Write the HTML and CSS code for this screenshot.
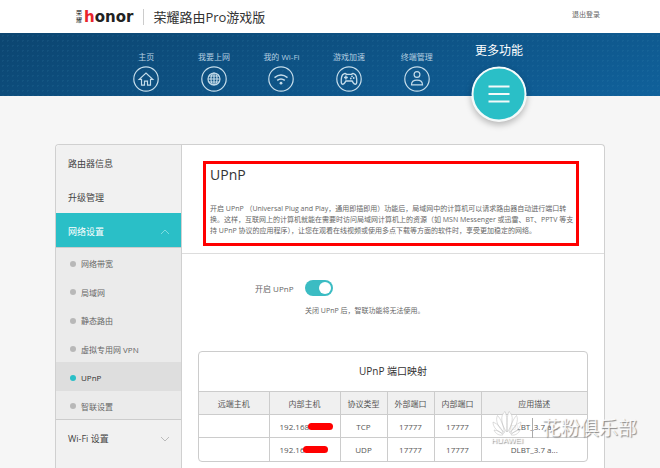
FILE: index.html
```
<!DOCTYPE html>
<html lang="zh-CN">
<head>
  <meta charset="UTF-8">
  <meta name="viewport" content="width=device-width, initial-scale=1.0">
  <title>荣耀路由Pro游戏版</title>
  <link rel="stylesheet" href="styles.css">
</head>
<body>
  <header class="header">
    <div class="brand">
      <span class="brand-cn">荣<br>耀</span>
      <span class="brand-en"><span class="red">h</span>onor</span>
      <span class="brand-title">荣耀路由Pro游戏版</span>
    </div>
    <a href="#" class="logout">退出登录</a>
  </header>

  <nav class="nav">
    <div class="nav-list">
      <a href="#" class="nav-item">
        <span>主页</span>
        <svg viewBox="0 0 26 26">
          <circle cx="13" cy="13" r="12.2"/>
          <path d="M6.2 13.4 13 7l6.8 6.4h-2.3v5.8h-3v-4h-3v4h-3v-5.8z"/>
        </svg>
      </a>
      <a href="#" class="nav-item">
        <span>我要上网</span>
        <svg viewBox="0 0 26 26">
          <circle cx="13" cy="13" r="12.2"/>
          <circle cx="13" cy="13" r="6"/>
          <ellipse cx="13" cy="13" rx="3" ry="6"/>
          <path d="M13 7v12M7 13h12M8 10h10M8 16h10"/>
        </svg>
      </a>
      <a href="#" class="nav-item">
        <span>我的 Wi-Fi</span>
        <svg viewBox="0 0 26 26">
          <circle cx="13" cy="13" r="12.2"/>
          <path d="M6.5 11.6q6.5-5.2 13 0M9.2 14.4q3.8-3 7.6 0" stroke-width="1.5"/>
          <circle cx="13" cy="17.2" r="1.4" class="fill"/>
        </svg>
      </a>
      <a href="#" class="nav-item">
        <span>游戏加速</span>
        <svg viewBox="0 0 26 26">
          <circle cx="13" cy="13" r="12.2"/>
          <path d="M7.8 7.800q1.600-.8 2.800.6h4.800q1.200-1.400 2.800-.6c2 .8 2.700 5.600 2.500 9-.1 2-2.300 1.900-3.200.4l-1.400-2.200h-6.200l-1.400 2.200c-.9 1.500-3.100 1.600-3.200-.4-.2-3.400.5-8.200 2.500-9z" stroke-width="1.4"/>
          <path d="M8 11.500h3.800M9.900 9.600v3.800" stroke-width="1.400"/>
          <circle cx="16" cy="10.300" r=".9" class="fill"/>
          <circle cx="17.700" cy="12" r=".9" class="fill"/>
          <circle cx="14.800" cy="12.500" r=".9" class="fill"/>
        </svg>
      </a>
      <a href="#" class="nav-item">
        <span>终端管理</span>
        <svg viewBox="0 0 26 26">
          <circle cx="13" cy="13" r="12.2"/>
          <circle cx="13" cy="8.500" r="2.900"/>
          <path d="M7.500 18.800c0-3 2-4.600 5.500-4.600s5.500 1.600 5.500 4.600z"/>
        </svg>
      </a>
      <a href="#" class="nav-item more">
        <span>更多功能</span>
        <svg viewBox="0 0 56 56">
          <circle cx="28" cy="28" r="26.500"/>
          <path d="M17.500 20.500h21M17.500 28h21M17.500 35.500h21"/>
        </svg>
      </a>
    </div>
  </nav>

  <main class="panel">
    <aside class="sidebar">
      <a href="#" class="menu">路由器信息</a>
      <a href="#" class="menu">升级管理</a>
      <a href="#" class="menu active">网络设置
        <svg viewBox="0 0 10 6"><path d="M1 5l4-4 4 4"/></svg>
      </a>
      <div class="submenu">
        <a href="#">网络带宽</a>
        <a href="#">局域网</a>
        <a href="#">静态路由</a>
        <a href="#">虚拟专用网 VPN</a>
        <a href="#" class="current">UPnP</a>
        <a href="#">智联设置</a>
      </div>
      <a href="#" class="menu">Wi-Fi 设置
        <svg viewBox="0 0 10 6"><path d="M1 1l4 4 4-4"/></svg>
      </a>
    </aside>

    <div class="content">
      <section class="intro">
        <div class="intro-box">
          <h1>UPnP</h1>
          <p>开启 UPnP （Universal Plug and Play，通用即插即用）功能后，局域网中的计算机可以请求路由器自动进行端口转<br>换。这样，互联网上的计算机就能在需要时访问局域网计算机上的资源（如 MSN Messenger 或迅雷、BT、PPTV 等支<br>持 UPnP 协议的应用程序），让您在观看在线视频或使用多点下载等方面的软件时，享受更加稳定的网络。</p>
        </div>
      </section>

      <section class="setting">
        <label for="upnp">开启 UPnP</label>
        <input type="checkbox" id="upnp" class="switch" checked>
        <p class="note">关闭 UPnP 后，智联功能将无法使用。</p>
      </section>

      <section class="mapping">
        <h2>UPnP 端口映射</h2>
        <table>
          <colgroup>
            <col class="w-remote"><col class="w-host"><col class="w-port"><col class="w-port"><col class="w-port"><col>
          </colgroup>
          <thead>
            <tr><th>远端主机</th><th>内部主机</th><th>协议类型</th><th>外部端口</th><th>内部端口</th><th>应用描述</th></tr>
          </thead>
          <tbody>
            <tr><td></td><td><span class="ip">192.168<i class="mask"></i></span></td><td>TCP</td><td>17777</td><td>17777</td><td>DLBT_3.7 a...</td></tr>
            <tr><td></td><td><span class="ip">192.16<i class="mask"></i></span></td><td>UDP</td><td>17777</td><td>17777</td><td>DLBT_3.7 a...</td></tr>
          </tbody>
        </table>
      </section>
    </div>
  </main>

  <div class="watermark">
    <div class="huawei">
      <svg viewBox="0 0 30 25">
        <path d="M14.500 21C9 13 8 4 13 .5c2 4 2.500 12 1.500 20.500zM15.500 21C21 13 22 4 17 .5c-2 4-2.500 12-1.500 20.500zM12.500 21.500C6 17 3 9 5.500 4.500 9 8 11.500 15 12.500 21.500zM17.500 21.500C24 17 27 9 24.500 4.500 21 8 18.500 15 17.500 21.500zM11.500 22.500C5 21 1 16 1 11c5 2 8.500 6 10.500 11.500zM18.500 22.500C25 21 29 16 29 11c-5 2-8.500 6-10.500 11.500zM11 23.800C7 25 3.500 22.500 2 19c4 .5 7 2 9 4.800zM19 23.800C23 25 26.500 22.500 28 19c-4 .5-7 2-9 4.800z"/>
      </svg>
      <span>HUAWEI</span>
    </div>
    <div class="club">花粉俱乐部</div>
  </div>
</body>
</html>
```
FILE: styles.css
```
* {
  box-sizing: border-box;
}

body {
  margin: 0;
  min-height: 100vh;
  display: flex;
  flex-direction: column;
  position: relative;
  background-color: #f6f6f6;
  color: #666;
  font-family: "Open Sans", "Noto Sans CJK SC", sans-serif;
  font-size: 8px;
}

a {
  color: inherit;
  text-decoration: none;
}

h1, h2, p {
  margin: 0;
  font-weight: normal;
}

/* header */
.header {
  height: 33px;
  padding: 0 60px 0 76px;
  display: flex;
  align-items: center;
  justify-content: space-between;
  background-color: #fff;
}

.brand {
  display: flex;
  align-items: center;
  white-space: nowrap;
}

.brand-cn {
  font-size: 6px;
  line-height: 7px;
  color: #222;
  margin-right: 2px;
}

.brand-en {
  font: bold 15px/20px "DejaVu Sans", sans-serif;
  color: #222;
}

.brand-en .red {
  color: #e8252b;
}

.brand-title {
  margin-left: 10px;
  padding-left: 9px;
  border-left: 1px solid #ccc;
  font-size: 13px;
  line-height: 16px;
  color: #333;
}

.logout {
  font-size: 7px;
  line-height: 10px;
  margin-bottom: 4px;
}

/* navigation */
.nav {
  height: 63px;
  background:
    radial-gradient(circle, rgba(70, 150, 190, 0.12) 1px, transparent 1px) 0 0 / 5px 5px,
    linear-gradient(165deg, #0c4570, #10619b);
}

.nav-list {
  width: 435px;
  margin: 0 auto;
  display: grid;
  grid-template-columns: repeat(5, 1fr) 97px;
}

.nav-item {
  padding-top: 18px;
  display: flex;
  flex-direction: column;
  align-items: center;
  line-height: 12px;
  white-space: nowrap;
  color: #b4cfe1;
}

.nav-item svg {
  width: 26px;
  height: 26px;
  margin-top: 3px;
  fill: none;
  stroke: #c4dcea;
  stroke-width: 1.2;
}

.nav-item svg .fill {
  fill: #c4dcea;
  stroke: none;
}

.nav-item.more {
  padding-top: 10px;
  font-size: 12px;
  line-height: 16px;
  color: #fff;
}

.nav-item.more svg {
  width: 56px;
  height: 56px;
  margin-top: 7px;
  fill: #2abfc7;
  stroke: #f4fafa;
  stroke-width: 2;
  border-radius: 50%;
  box-shadow: 0 3px 6px rgba(0, 0, 0, 0.25);
}

/* main panel */
.panel {
  flex: 1;
  width: calc(100% - 110px);
  margin: 48px auto 0;
  display: flex;
  border: 1px solid #d0d0d0;
  border-bottom: 0;
  border-radius: 4px 4px 0 0;
  background-color: #fff;
}

.sidebar {
  width: 126px;
  border-right: 1px solid #d0d0d0;
  border-radius: 4px 0 0 0;
  background-color: #f1f1f1;
}

.menu {
  height: 34px;
  padding: 3px 11px 0 12px;
  display: flex;
  align-items: center;
  justify-content: space-between;
  font-size: 9px;
  color: #444;
}

.menu svg {
  width: 10px;
  height: 6px;
  fill: none;
  stroke: #bbb;
}

.menu.active {
  background-color: #2abfc7;
  color: #fff;
}

.menu.active svg {
  stroke: #7fdce0;
}

.submenu {
  height: 173px;
  display: grid;
  grid-auto-rows: 1fr;
  border-top: 1px solid #ccc;
  border-bottom: 1px solid #ccc;
  background-color: #ebebeb;
}

.submenu a {
  padding: 3px 0 0 14px;
  display: flex;
  align-items: center;
  gap: 5px;
}

.submenu a::before {
  content: "";
  width: 6px;
  height: 6px;
  border-radius: 50%;
  background-color: #b8b8b8;
}

.submenu .current {
  background-color: #dedede;
  color: #333;
}

.submenu .current::before {
  background-color: #2abfc7;
}

.content {
  flex: 1;
  min-width: 0;
}

.intro {
  padding: 16px 25px 7px 21px;
  border-bottom: 1px solid #ddd;
}

.intro-box {
  padding: 2px 4px 7px;
  border: 3px solid #f00;
}

h1 {
  font-size: 14px;
  line-height: 18px;
  color: #333;
}

.intro-box p {
  margin-top: 19px;
  font-size: 7px;
  line-height: 11px;
  white-space: nowrap;
}

.setting {
  padding: 26px 0 0 73px;
  display: grid;
  grid-template-columns: 40px 1fr;
  column-gap: 10px;
  align-items: center;
  white-space: nowrap;
}

.switch {
  appearance: none;
  width: 28px;
  height: 16px;
  margin: 0;
  padding: 2px;
  border-radius: 8px;
  background-color: #3bbcc3;
}

.switch::before {
  content: "";
  display: block;
  width: 12px;
  height: 12px;
  margin-left: auto;
  border-radius: 50%;
  background-color: #fff;
}

.note {
  grid-column: 2;
  margin-top: 10px;
  font-size: 7px;
  line-height: 10px;
}

.mapping {
  margin: 35px 16px 0;
  border: 1px solid #ccc;
  border-radius: 4px;
  overflow: hidden;
}

h2 {
  font-size: 10px;
  line-height: 39px;
  text-align: center;
  color: #333;
}

table {
  width: 100%;
  table-layout: fixed;
  border-collapse: collapse;
  color: #555;
}

.w-remote {
  width: 70px;
}

.w-host {
  width: 71px;
}

.w-port {
  width: 47px;
}

th, td {
  height: 23px;
  padding: 0;
  border-top: 1px solid #ccc;
  border-left: 1px solid #ccc;
  font-weight: normal;
  text-align: center;
}

th:first-child, td:first-child {
  border-left: 0;
}

th {
  background-color: #f0f0f0;
}

.ip {
  width: 50px;
  display: inline-flex;
  align-items: center;
}

.mask {
  flex: none;
  width: 25px;
  height: 7px;
  margin-left: -1px;
  border-radius: 4px;
  background-color: #f00;
}

/* watermark */
.watermark {
  position: absolute;
  right: 23px;
  top: 411px;
  display: flex;
  align-items: center;
  color: rgba(255, 255, 255, 0.85);
  text-shadow: 1px 1px 1px #888;
}

.huawei {
  display: flex;
  flex-direction: column;
  align-items: center;
  font: 8px/9px "Liberation Sans", sans-serif;
}

.huawei svg {
  width: 30px;
  height: 25px;
  fill: rgba(255, 255, 255, 0.85);
  stroke: #bbb;
  stroke-width: 0.5;
}

.club {
  margin-left: 9px;
  padding-left: 9px;
  border-left: 1px solid #aaa;
  font-size: 19px;
  line-height: 20px;
}
```
